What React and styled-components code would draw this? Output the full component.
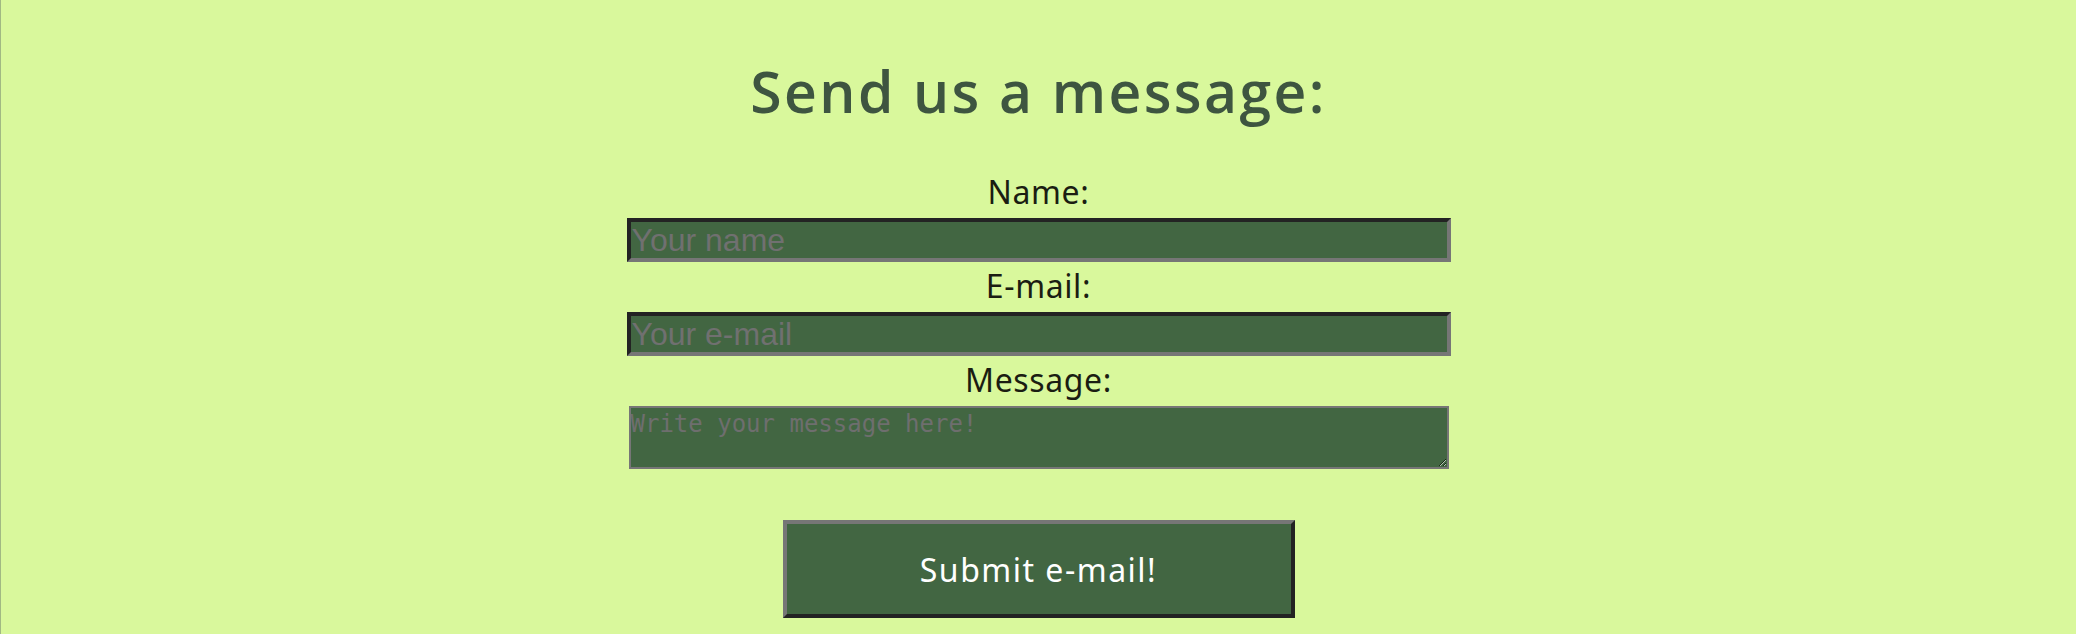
import React from 'react';
import styled, { createGlobalStyle } from 'styled-components';

const GlobalStyle = createGlobalStyle`
  body {
    margin: 0;
    background: #d9f89c;
  }
  * {
    box-sizing: border-box;
  }
`;

const Page = styled.main`
  display: flex;
  flex-direction: column;
  align-items: center;
  min-height: 100vh;
  padding-top: 52px;
  border-left: 1px solid #a1b983;
`;

const Title = styled.h1`
  margin: 0 0 38px;
  font-family: 'Open Sans', 'Noto Sans', sans-serif;
  font-weight: 600;
  font-size: 57px;
  line-height: 78px;
  letter-spacing: 2.4px;
  color: #3e5540;
`;

const ContactForm = styled.form`
  display: flex;
  flex-direction: column;
  align-items: center;
`;

const FieldLabel = styled.label`
  display: block;
  padding: 2px 0 4px;
  font-family: 'Noto Sans', sans-serif;
  font-size: 32px;
  line-height: 44px;
  letter-spacing: 0.6px;
  color: #1b1d12;
`;

const TextInput = styled.input`
  display: block;
  width: 824px;
  height: 44px;
  margin: 0;
  padding: 0 1px;
  border-width: 4px;
  border-style: solid;
  border-color: #232323 #767676 #767676 #232323;
  background: #426642;
  font-family: 'Liberation Sans', Arial, sans-serif;
  font-size: 32px;
  color: #f2f2f2;
  outline: none;

  &::placeholder {
    color: #707070;
  }
`;

const MessageArea = styled.textarea`
  display: block;
  width: 820px;
  height: 63px;
  margin: 0;
  padding: 2px 0;
  border: 2px solid #767676;
  background: #426642;
  font-family: 'DejaVu Sans Mono', monospace;
  font-size: 24px;
  color: #f2f2f2;
  outline: none;

  &::placeholder {
    color: #6e6e6e;
  }
`;

const SubmitButton = styled.button`
  width: 512px;
  height: 98px;
  margin-top: 51px;
  border-width: 4px;
  border-style: solid;
  border-color: #767676 #232323 #232323 #767676;
  background: #426642;
  font-family: 'Noto Sans', sans-serif;
  font-size: 32px;
  letter-spacing: 1.5px;
  color: #ffffff;
  cursor: pointer;
`;

const App = () => (
  <React.Fragment>
    <GlobalStyle />
    <Page>
      <Title>Send us a message:</Title>
      <ContactForm onSubmit={e => e.preventDefault()}>
        <FieldLabel htmlFor="name">Name:</FieldLabel>
        <TextInput id="name" type="text" placeholder="Your name" />
        <FieldLabel htmlFor="email">E-mail:</FieldLabel>
        <TextInput id="email" type="email" placeholder="Your e-mail" />
        <FieldLabel htmlFor="message">Message:</FieldLabel>
        <MessageArea id="message" placeholder="Write your message here!" />
        <SubmitButton type="submit">Submit e-mail!</SubmitButton>
      </ContactForm>
    </Page>
  </React.Fragment>
);

export default App;
